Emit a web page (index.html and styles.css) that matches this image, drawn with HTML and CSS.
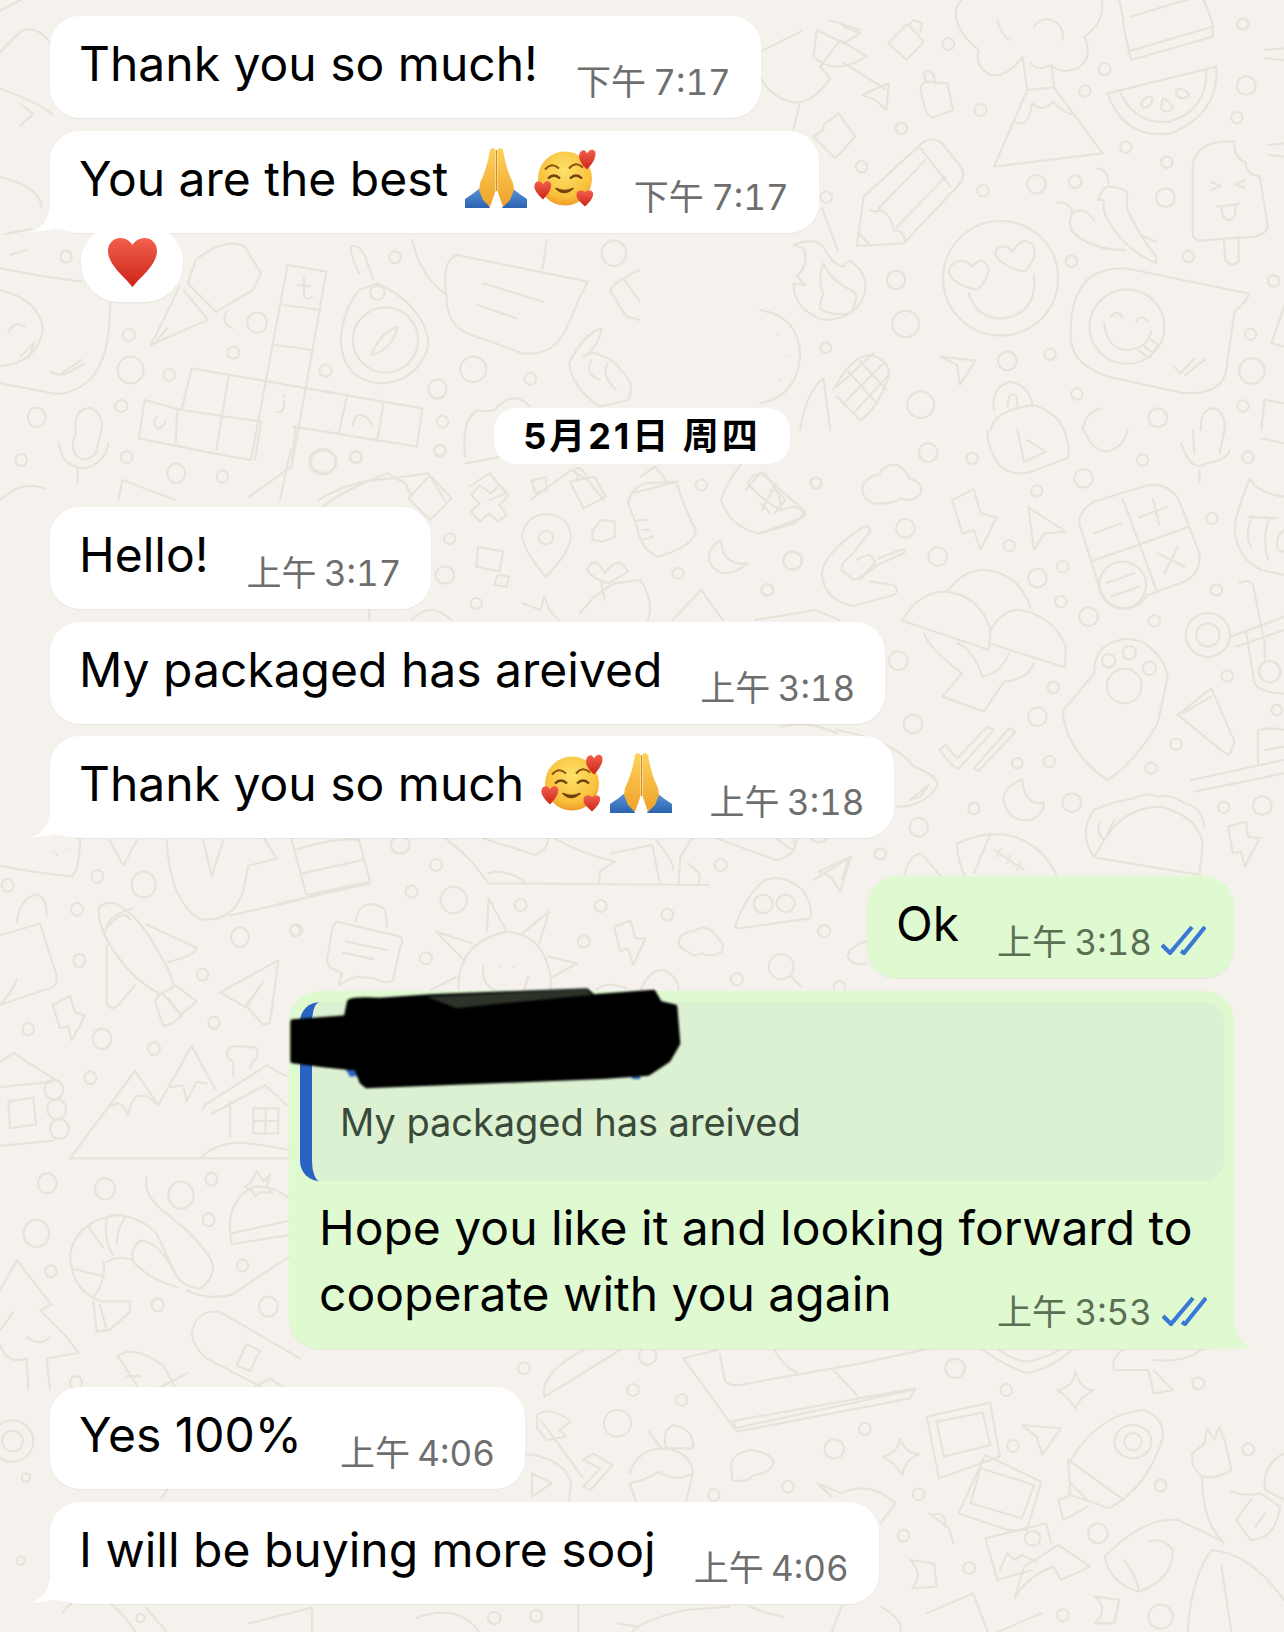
FILE: index.html
```html
<!DOCTYPE html>
<html>
<head>
    <meta charset="utf-8">
    <title>Chat</title>
    <link rel="stylesheet" href="styles.css">
</head>
<body>
    <svg class="doodles" width="1284" height="1632" viewBox="0 0 1284 1632" fill="none">
        <!-- top right -->
        <g transform="translate(760 0) scale(.3342 .3333)">
            <circle cx="563" cy="132" r="18"/><circle cx="1031" cy="207" r="18"/><circle cx="972" cy="273" r="17"/><circle cx="660" cy="330" r="18"/><circle cx="423" cy="385" r="17"/><circle cx="1095" cy="442" r="17"/><circle cx="1217" cy="487" r="17"/><circle cx="304" cy="500" r="17"/><circle cx="667" cy="572" r="17"/><circle cx="827" cy="553" r="28"/><circle cx="943" cy="545" r="19"/><circle cx="1213" cy="593" r="28"/><circle cx="1445" cy="72" r="17"/><circle cx="1455" cy="257" r="28"/><circle cx="1427" cy="353" r="17"/><circle cx="198" cy="592" r="17"/><circle cx="407" cy="840" r="28"/><circle cx="436" cy="972" r="40"/><circle cx="197" cy="1043" r="16"/><circle cx="932" cy="784" r="17"/><circle cx="1282" cy="770" r="17"/><circle cx="1537" cy="843" r="17"/><circle cx="1468" cy="1003" r="17"/><circle cx="868" cy="1063" r="17"/><circle cx="740" cy="1083" r="28"/><circle cx="1472" cy="1113" r="38"/><circle cx="481" cy="1214" r="40"/><circle cx="948" cy="1182" r="17"/><circle cx="1190" cy="1253" r="28"/><circle cx="1445" cy="1218" r="17"/>
            <!-- volcano -->
            <path d="M700 500 L800 270 L880 262 L1025 460 Z M800 270 L785 170 M880 262 L872 195 M765 365 Q800 390 815 310 Q850 340 875 305 Q910 340 940 345"/>
            <path d="M785 170 Q740 235 690 225 Q640 200 655 150 Q590 100 585 40 Q590 0 620 -10 M1020 -10 Q1040 60 970 110 Q1000 170 950 205 Q900 225 872 195 Q830 215 810 190 M820 80 Q850 40 890 70 Q910 90 905 120 M710 60 Q720 100 745 120"/>
            <!-- watermelon -->
            <path d="M1040 280 L1365 200 Q1375 340 1230 400 Q1090 420 1040 280 Z M1075 272 Q1120 375 1225 365 Q1340 330 1335 210"/>
            <path d="M1140 310 Q1160 280 1175 295 Q1170 325 1145 322 Z M1205 295 Q1230 305 1235 325 Q1215 345 1200 325 Z M1245 270 Q1270 260 1285 285 Q1265 305 1245 285 Z"/>
            <!-- popsicle -->
            <path d="M1295 700 L1295 490 Q1310 430 1385 425 L1420 425 Q1415 470 1455 490 Q1450 520 1495 530 L1520 680 Q1510 715 1440 712 L1320 722 Q1295 720 1295 700 Z M1388 722 L1392 780 Q1410 805 1432 785 L1432 716 M1350 545 L1378 558 L1350 570 M1450 540 L1422 552 L1450 565 M1368 620 L1432 612 M1380 622 L1385 650 Q1405 670 1420 650 L1424 615"/>
            <!-- pencil -->
            <path d="M310 590 L490 425 Q520 410 545 430 L600 500 Q620 530 590 560 L430 730 L290 738 Z M290 738 L310 590 M480 445 L570 560 M355 625 L495 480 M410 680 L555 530 M330 630 Q350 640 360 630 Q390 640 400 690 Q430 690 435 725 M295 700 L330 735"/>
            <!-- heart eyes -->
            <circle cx="720" cy="835" r="172"/>
            <path d="M630 865 C570 850 550 810 580 790 Q610 770 635 800 Q670 760 685 810 Q680 840 650 870 Z M790 815 C730 800 690 770 710 745 Q735 730 755 755 Q790 700 820 740 Q830 780 790 815 Z M625 880 Q650 960 730 955 Q830 940 820 825"/>
            <!-- smiley blob -->
            <path d="M1460 880 Q1470 890 1420 935 L1395 1110 Q1380 1190 1260 1178 L1040 1130 Q920 1090 930 990 Q930 880 990 830 Q1050 795 1120 810 Z"/>
            <circle cx="1098" cy="980" r="112"/>
            <path d="M1030 970 Q1040 1050 1100 1050 Q1160 1045 1170 995 M1050 952 Q1068 925 1085 952 M1125 965 Q1140 940 1160 965 M1130 1050 L1165 1075 L1190 1035 L1170 1020 M1150 1040 L1170 1055 M1238 1098 L1258 1120 L1300 1075 M1272 1125 L1332 1078"/>
            <!-- chili -->
            <path d="M1005 505 Q1040 505 1042 548 M1012 600 Q1030 550 1050 560 Q1090 565 1100 578 Q1095 600 1100 630 Q1130 700 1185 770 L1185 790 Q1100 750 1060 690 Q1020 640 1030 600 Z M890 608 Q930 605 935 640 Q920 670 935 695 Q990 750 1090 750 M935 640 Q965 615 1000 660 M1140 705 L1185 725"/>
            <!-- flame -->
            <path d="M100 735 Q160 710 190 740 Q220 800 250 800 Q260 775 280 790 Q330 830 310 890 Q280 960 190 960 Q100 930 100 850 L135 855 L110 830 Q150 790 130 745 Z M190 790 Q170 840 190 880 Q180 900 180 925 Q210 950 270 940 Q300 890 280 875 Q210 840 190 790 Z"/>
            <!-- left bits -->
            <path d="M383 130 L438 75 L445 75 L490 125 L438 180 Z M445 75 L460 60 L485 70 L480 95"/>
            <path d="M480 270 Q480 250 500 245 L560 250 L578 330 L520 352 Q500 350 495 330 Z M495 240 L490 220 Q505 205 520 225 L525 250"/>
            <path d="M305 285 L385 250 L378 330 L345 300 Z M250 80 L300 100 L250 130 L170 90 L160 170 Q220 230 320 170 L240 120 L180 200 L210 235 Q150 320 90 305 Q30 290 0 230 M120 305 L100 390 M205 60 L300 90"/>
            <path d="M235 340 L285 410 L225 475 L180 430 L160 410 L190 390 L190 375 Z"/>
            <!-- cake -->
            <path d="M1090 90 Q1085 40 1075 0 M1355 80 Q1345 30 1320 -10 M1090 90 L1110 180 L1355 110 L1355 80 L1100 155 M1110 50 L1290 -5"/>
            <!-- plane, corn -->
            <path d="M540 1070 L645 1082 L598 1155 L590 1095 Z"/>
            <path d="M120 1290 Q140 1170 190 1135 L210 1290 M220 1170 Q270 1070 330 1065 Q390 1080 385 1130 Q350 1230 300 1260 L230 1190 M260 1110 L350 1210 M300 1085 L380 1170 M230 1160 L340 1060 M250 1210 L370 1090 M280 1240 L380 1130"/>
            <!-- lock -->
            <path d="M690 1290 Q700 1230 820 1215 Q890 1240 910 1290 M700 1230 Q690 1160 750 1145 Q810 1160 815 1220 M740 1220 L745 1190 Q755 1175 768 1190 L770 1220"/>
            <path d="M965 1290 Q975 1235 1020 1225 M1320 1290 Q1315 1225 1360 1225 Q1395 1240 1390 1290 M1500 1290 L1510 1200 L1570 1210"/>
            <path d="M0 930 Q120 950 120 1070 Q110 1190 0 1210 M55 1005 L55 1006 M80 1070 L80 1071 M60 1140 L60 1141 M1568 920 L1530 1030 L1570 1040 M1510 150 L1568 145 M1510 175 L1568 180 M1520 435 L1568 430 M1520 465 L1568 470"/>
        </g>
        <!-- right middle -->
        <g transform="translate(760 430) scale(.3342 .3333)">
            <circle cx="503" cy="68" r="28"/><circle cx="635" cy="85" r="17"/><circle cx="1145" cy="90" r="17"/><circle cx="1460" cy="82" r="17"/><circle cx="968" cy="145" r="28"/><circle cx="168" cy="160" r="16"/><circle cx="828" cy="183" r="17"/><circle cx="1352" cy="265" r="17"/><circle cx="435" cy="295" r="28"/><circle cx="532" cy="380" r="28"/><circle cx="98" cy="392" r="28"/><circle cx="746" cy="347" r="17"/><circle cx="905" cy="410" r="17"/><circle cx="830" cy="444" r="28"/><circle cx="22" cy="480" r="18"/><circle cx="900" cy="515" r="17"/><circle cx="983" cy="560" r="28"/><circle cx="1366" cy="480" r="17"/><circle cx="1180" cy="573" r="17"/><circle cx="414" cy="692" r="28"/><circle cx="878" cy="772" r="17"/><circle cx="1398" cy="738" r="17"/><circle cx="1546" cy="840" r="16"/><circle cx="458" cy="882" r="28"/><circle cx="830" cy="860" r="28"/><circle cx="1245" cy="943" r="17"/><circle cx="770" cy="1000" r="16"/><circle cx="866" cy="995" r="17"/><circle cx="1170" cy="1015" r="17"/><circle cx="933" cy="1118" r="28"/><circle cx="640" cy="1136" r="17"/><circle cx="1387" cy="1132" r="17"/><circle cx="1503" cy="1127" r="28"/><circle cx="475" cy="1192" r="28"/><circle cx="360" cy="1272" r="17"/>
            <!-- calculator -->
            <path d="M955 280 Q955 240 1000 215 L1160 165 Q1230 160 1255 215 L1315 370 Q1320 430 1270 455 L1160 495 Q1130 540 1080 535 Q1030 525 1015 470 Z M1085 205 L1190 490 M990 395 L1285 290 M1000 310 L1080 280 M1135 262 L1220 230 M1175 205 L1195 285 M1190 370 L1270 410 M1250 350 L1210 430"/>
            <circle cx="1085" cy="465" r="70"/>
            <path d="M1035 460 L1120 430 M1050 500 L1135 470"/>
            <!-- bolt, plane -->
            <path d="M575 210 L640 178 L660 250 L708 262 L660 360 L640 300 L605 310 Z"/>
            <path d="M803 232 L915 305 L850 310 L820 360 Z"/>
            <!-- cloud -->
            <path d="M340 220 Q295 200 310 160 Q340 130 355 135 Q370 100 410 105 Q440 120 445 145 Q490 155 480 190 Q460 220 420 205 Q390 225 340 220 Z"/>
            <!-- rock hand -->
            <path d="M310 290 Q330 285 330 305 L270 380 M310 290 Q190 370 185 430 Q190 510 280 528 L400 495 Q420 480 400 465 L330 455 M270 380 Q240 400 245 420 L280 450 Q310 440 350 405 L430 370 Q440 355 420 360 L355 385 M290 390 Q310 375 330 375 L345 395 L300 450"/>
            <path d="M0 125 Q60 180 125 235 Q150 255 120 265 L0 310 M30 180 Q60 180 75 210 L45 250 M0 220 Q15 230 30 250"/>
            <!-- tacos helmet -->
            <path d="M425 572 Q480 480 560 485 Q660 500 690 600 L685 660 Z M560 485 Q610 415 680 420 Q780 435 810 535 M690 600 Q730 535 780 540 Q880 560 915 650 L912 712 L685 640"/>
            <path d="M490 610 Q510 660 605 730 L545 800 L670 845 L730 755 Q800 750 820 700 M590 640 Q640 660 665 740 Q720 730 745 670"/>
            <!-- paw -->
            <path d="M905 845 L1000 730 Q1000 660 1050 640 Q1100 615 1150 640 Q1210 680 1220 740 L1190 880 Q1120 1000 1040 1050 Q920 970 905 845 Z"/>
            <circle cx="1090" cy="768" r="52"/><circle cx="1043" cy="692" r="20"/><circle cx="1105" cy="668" r="20"/><circle cx="1165" cy="715" r="20"/>
            <!-- tube, scissors -->
            <path d="M1250 855 L1350 775 L1420 935 L1405 975 L1385 965 Z M1265 850 L1350 800"/>
            <circle cx="1340" cy="615" r="66"/><circle cx="1340" cy="615" r="35"/>
            <path d="M1410 620 L1568 560 M1425 650 L1568 600 M1435 460 Q1460 445 1475 465 L1510 640 L1510 690 M1455 610 L1480 760 Q1500 790 1568 790"/>
            <circle cx="1525" cy="725" r="32"/>
            <!-- ticks -->
            <path d="M537 958 L555 945 L590 985 L680 890 L700 900 L595 1015 Q580 1020 537 958 Z M640 1015 L745 895 L765 905 L655 1022 Z"/>
            <!-- moon -->
            <path d="M785 1048 Q720 1075 730 1120 Q750 1180 810 1170 Q850 1150 850 1118 Q790 1130 785 1048 Z"/>
            <!-- taco -->
            <path d="M1000 1282 L1030 1230 Q1090 1130 1200 1130 Q1310 1160 1325 1240 L1315 1335 L1000 1282 Z M1000 1282 Q950 1210 1000 1140 Q1050 1115 1120 1105 Q1160 1085 1190 1100 Q1230 1090 1270 1120 Q1320 1130 1330 1190 M1030 1230 Q1000 1200 1020 1175 M1060 1170 L1040 1210"/>
            <!-- football -->
            <path d="M590 1240 Q720 1180 820 1250 Q880 1300 890 1350 M590 1240 Q590 1300 620 1350 M690 1210 L640 1330 M700 1260 L790 1320 M720 1255 L710 1280 M750 1275 L740 1300 M780 1295 L770 1320"/>
            <path d="M1400 1190 L1455 1175 L1460 1220 L1495 1225 L1450 1310 L1440 1265 L1415 1270 Z M1290 1050 L1568 990 M1300 1085 L1568 1030 M1490 1000 L1490 900 Q1530 890 1568 900 M1510 960 L1568 950"/>
            <path d="M680 0 Q680 60 720 110 Q770 150 850 110 L920 85 Q930 60 910 0 M770 0 L790 95 L855 65 L800 30 M970 0 Q990 60 1040 65 Q1090 50 1100 0 M1260 40 Q1290 130 1335 100 Q1400 90 1405 60 M1295 0 L1300 70 M1390 0 L1375 70 M1315 120 L1315 160 M1500 25 L1568 40"/>
            <path d="M1465 145 Q1490 190 1568 200 M1465 145 Q1420 260 1420 300 Q1430 390 1500 420 L1568 435 M1460 260 L1545 265 M1470 260 Q1450 330 1470 350 M1525 265 Q1500 320 1520 390 M1568 300 Q1540 320 1550 360 L1568 365"/>
            <path d="M160 1350 L265 1285 L245 1350 M430 1350 Q440 1280 480 1270 Q510 1300 550 1350 M60 890 Q150 870 230 910 M230 900 Q400 930 460 1010 Q540 1040 530 1070 Q490 1130 410 1130 M450 1110 L505 1065 L480 1100 Z M50 1225 Q120 1290 100 1225 M150 1225 Q180 1250 200 1225"/>
        </g>
        <!-- left lower -->
        <g transform="translate(0 830) scale(.3333 .357)">
            <circle cx="292" cy="130" r="18"/><circle cx="431" cy="153" r="36"/><circle cx="23" cy="155" r="18"/><circle cx="231" cy="222" r="18"/><circle cx="720" cy="300" r="27"/><circle cx="885" cy="282" r="15"/><circle cx="238" cy="365" r="18"/><circle cx="608" cy="405" r="17"/><circle cx="85" cy="558" r="17"/><circle cx="306" cy="585" r="28"/><circle cx="642" cy="540" r="17"/><circle cx="462" cy="612" r="18"/><circle cx="271" cy="694" r="18"/><circle cx="142" cy="990" r="28"/><circle cx="315" cy="1005" r="30"/><circle cx="543" cy="1023" r="38"/><circle cx="634" cy="978" r="18"/><circle cx="626" cy="1092" r="18"/><circle cx="109" cy="1130" r="38"/><circle cx="153" cy="1236" r="17"/><circle cx="728" cy="1220" r="17"/><circle cx="473" cy="1330" r="18"/><circle cx="805" cy="1335" r="28"/><circle cx="228" cy="1548" r="18"/>
            <!-- rocket -->
            <path d="M295 225 Q300 200 345 205 Q420 240 480 350 Q520 410 520 440 L480 460 Q400 420 350 350 Q300 290 295 225 Z M315 290 Q320 240 395 220 M325 270 Q370 220 390 250 M440 265 L590 330 Q590 350 505 370 M320 325 L320 485 Q335 510 355 490 L405 435 M480 460 L465 480 L490 550 L520 540 L545 520 L490 460 M520 430 L590 480 L545 515 M505 470 L545 520"/>
            <path d="M660 455 L835 365 L810 540 L790 545 L740 495 L790 425 L735 495 Z"/>
            <path d="M158 490 L210 465 L225 510 L255 520 L215 590 L205 550 L180 555 Z"/>
            <!-- mountains + house -->
            <path d="M210 920 L405 675 L475 770 L575 605 L645 725 M330 775 Q370 750 382 800 Q400 740 420 745 L440 745 L475 770 M510 720 L550 715 L560 760 L590 705 L620 710"/>
            <path d="M210 920 L870 920 M690 860 L690 760 M610 780 L615 770 L800 660 L860 690 M635 795 L795 715 L860 770 M700 690 L700 650 L680 635 Q680 605 710 605 L770 610 Q780 640 755 650 L750 670"/>
            <path d="M760 780 L835 780 L835 850 L760 850 Z M797 780 L797 850 M760 815 L835 815 M600 920 Q640 880 720 875 Q770 880 865 895"/>
            <!-- cabin -->
            <path d="M0 650 L40 625 L175 705 M0 720 L160 705 M0 885 L160 870 M100 750 L25 760 L30 835 L108 825 Z"/>
            <circle cx="162" cy="727" r="28"/><circle cx="170" cy="782" r="28"/><circle cx="178" cy="837" r="28"/>
            <!-- bag bits -->
            <path d="M0 295 L120 262 L160 380 Q180 420 160 440 L0 490 M50 260 Q60 190 110 180 Q140 190 140 240 M0 100 Q100 120 215 130 Q240 110 240 20 M160 60 L160 61 M200 55 L200 56 M170 70 L170 71 M0 490 Q40 450 50 420"/>
            <path d="M500 30 Q510 200 600 250 Q700 260 730 170 L745 100 L830 80 L790 20 M610 30 L635 130 L670 30 M690 240 L900 195 M330 30 L370 100 L410 30"/>
            <!-- shrimp -->
            <path d="M210 1190 Q230 1090 360 1078 Q430 1090 470 1130 L530 1250 Q550 1280 600 1285 Q640 1260 640 1220 Q620 1160 480 1060 Q430 1020 440 970 M530 1250 L500 1200 Q460 1150 420 1150 Q390 1170 400 1210 Q450 1260 530 1280 M210 1190 Q215 1280 280 1310 L300 1320 L390 1320 L390 1350 L330 1400 L290 1405 L280 1320 M320 1400 L300 1330 M310 1210 Q320 1260 280 1310 M320 1210 Q350 1190 400 1205 M225 1230 L310 1250 M265 1110 L310 1170 M320 1090 Q310 1150 340 1190 M375 1085 Q350 1120 350 1160"/>
            <path d="M560 1290 Q630 1320 700 1300 Q790 1240 870 1195"/>
            <!-- beanie -->
            <path d="M695 1160 Q670 1040 760 1000 Q810 990 865 1030 M695 1130 L865 1095 M695 1160 L865 1135"/>
            <path d="M770 955 L790 985 L810 965 L800 1000 L815 1015 L780 1015 L765 1025 L755 1010 L735 1000 L755 985 Z"/>
            <!-- tree, board -->
            <path d="M0 1290 L50 1205 L155 1330 L120 1345 L200 1420 L235 1465 L140 1480 L150 1568 M0 1400 Q20 1380 40 1350 M80 1420 Q120 1450 150 1420 M0 1440 Q20 1500 80 1480 M80 1480 L85 1568"/>
            <path d="M900 1480 L660 1350 Q590 1340 575 1410 Q580 1450 620 1480 L800 1568 M710 1500 L740 1440 L780 1460 L750 1515 Z M350 1475 Q400 1440 490 1500 L530 1568 M355 1475 L420 1568 M380 1530 L420 1530"/>
        </g>
        <!-- crossword row -->
        <g transform="translate(0 240) scale(.408 .3333)">
            <path d="M705 75 L800 95 L715 680 L610 770 M705 75 L615 660 L525 640 L340 595 L355 480 L445 510 L470 385 L1035 505 L1022 620 L720 560 M695 195 L785 210 M675 315 L765 330 M660 425 L750 445 M445 510 L640 545 M560 410 L545 520 L530 630 M435 505 L430 610 M850 470 L830 580 M940 490 L925 600 M640 545 L625 660 M725 560 L715 670"/>
            <path d="M745 115 L745 170 Q755 185 765 170 M730 135 L760 138 M695 465 L695 470 M695 480 Q700 520 680 515 M385 530 Q370 545 385 565 Q400 565 405 545 M865 555 Q870 520 885 525 Q905 530 910 555"/>
            <!-- compass -->
            <path d="M880 150 L925 130 L970 160 Q1050 230 1050 320 Q1020 430 930 430 Q840 420 835 300 Q840 210 880 150 Z M860 20 Q880 10 895 50 L915 120 M880 100 Q860 50 860 20 M975 260 Q930 280 910 345 Q960 330 975 260 Z"/>
            <ellipse cx="945" cy="300" rx="80" ry="98"/><ellipse cx="925" cy="158" rx="18" ry="22"/>
            <!-- pen -->
            <path d="M440 140 L370 315 L470 260 L510 240 M450 150 L510 240 M480 60 Q550 -10 600 20 L640 100 L620 150 L530 215 L460 130 Z M410 265 L385 300 M555 215 Q540 250 570 265"/>
            <!-- bubble -->
            <path d="M1440 125 L1120 45 Q1080 60 1095 180 Q1095 270 1180 295 L1280 340 Q1360 350 1390 260 L1420 175 Z M1185 130 L1330 185 M1170 195 L1265 235"/>
            <path d="M1010 0 Q1030 110 1095 165 M1340 0 L1330 85"/>
            <!-- thumb -->
            <path d="M1475 265 Q1430 280 1395 370 Q1400 440 1470 500 L1540 480 Q1560 430 1520 390 Q1510 360 1470 345 Q1450 330 1430 350 M1475 265 Q1470 310 1440 340 M1450 360 Q1430 400 1470 420 M1490 370 Q1470 400 1510 450"/>
            <path d="M1568 90 Q1510 120 1495 150 L1535 230 L1568 240 M1530 120 L1568 185"/>
            <!-- dots -->
            <ellipse cx="162" cy="50" rx="14" ry="18"/><ellipse cx="968" cy="52" rx="14" ry="18"/><ellipse cx="1505" cy="40" rx="30" ry="38"/><ellipse cx="630" cy="248" rx="24" ry="30"/><ellipse cx="316" cy="285" rx="15" ry="18"/><ellipse cx="572" cy="338" rx="15" ry="18"/><ellipse cx="320" cy="390" rx="32" ry="40"/><ellipse cx="415" cy="405" rx="14" ry="18"/><ellipse cx="798" cy="392" rx="15" ry="18"/><ellipse cx="1160" cy="388" rx="32" ry="38"/><ellipse cx="1300" cy="416" rx="14" ry="18"/><ellipse cx="1072" cy="447" rx="22" ry="29"/><ellipse cx="297" cy="498" rx="15" ry="18"/><ellipse cx="90" cy="532" rx="22" ry="29"/><ellipse cx="1085" cy="545" rx="14" ry="18"/><ellipse cx="1078" cy="632" rx="14" ry="18"/><ellipse cx="52" cy="660" rx="14" ry="18"/><ellipse cx="310" cy="652" rx="14" ry="18"/><ellipse cx="790" cy="665" rx="32" ry="38"/><ellipse cx="872" cy="652" rx="15" ry="18"/><ellipse cx="432" cy="700" rx="22" ry="29"/><ellipse cx="545" cy="710" rx="14" ry="18"/>
            <!-- smiley, mic -->
            <path d="M0 150 Q100 180 105 270 Q90 370 0 378 M20 275 Q40 240 60 260 M50 350 L85 305 L70 355 M0 85 Q100 110 200 125 M270 190 Q270 360 220 420 Q170 470 130 460 L0 430 M125 395 L145 405 L200 360 M155 405 L205 372"/>
            <path d="M185 580 L185 540 Q195 500 225 505 Q250 520 250 560 L235 640 Q210 670 190 650 Q170 630 185 580 M145 610 Q150 680 205 685 Q260 670 265 610 M190 685 L190 730"/>
            <path d="M300 720 L430 780 M300 720 L290 780 M0 780 Q50 720 110 745 M780 780 Q860 720 960 715 L1050 700 L1090 780 M1140 650 Q1130 540 1170 510 Q1210 520 1220 500 Q1260 450 1300 500 M1140 670 L1230 650 M1300 780 L1400 690 L1440 720 L1480 780 M1150 740 L1200 700 L1240 760 L1200 780"/>
        </g>
        <!-- under the date -->
        <g transform="translate(280 440) scale(.357 .3333)">
            <ellipse cx="122" cy="65" rx="36" ry="34"/><ellipse cx="212" cy="52" rx="16" ry="16"/><ellipse cx="448" cy="32" rx="16" ry="16"/><ellipse cx="1180" cy="135" rx="16" ry="16"/><ellipse cx="1500" cy="128" rx="16" ry="16"/><ellipse cx="475" cy="296" rx="16" ry="16"/><ellipse cx="462" cy="405" rx="26" ry="26"/><ellipse cx="550" cy="490" rx="16" ry="16"/><ellipse cx="1115" cy="400" rx="16" ry="16"/><ellipse cx="1365" cy="450" rx="16" ry="16"/><ellipse cx="1435" cy="362" rx="26" ry="26"/><circle cx="745" cy="293" r="20"/>
            <path d="M745 410 Q680 330 678 285 Q690 225 745 222 Q810 225 815 290 Q810 340 745 410 Z M875 272 L900 240 L938 245 L938 290 L905 305 L875 300 Z"/>
            <path d="M360 175 L420 105 L480 175 L420 240 Z M535 165 L560 135 L590 160 L615 135 L640 165 L615 195 L635 225 L610 245 L585 220 L560 245 L535 215 L560 190 Z M705 122 L745 112 L748 150 L715 158 Z M812 125 L880 110 L912 170 L850 205 Z M835 115 L825 90 Q835 75 850 95 L865 115"/>
            <path d="M975 190 Q980 150 1020 130 L1110 125 Q1130 200 1165 270 Q1160 320 1060 350 Q1010 330 1000 260 Z M985 160 L1115 125 M1010 110 L1050 80 L1090 130 M1000 240 L1030 240 M1015 270 L1035 270 M1010 300 L1045 290"/>
            <path d="M1290 75 Q1250 130 1235 180 Q1260 260 1340 280 L1440 250 Q1490 215 1440 200 L1400 210 Q1340 170 1310 130 Q1320 100 1355 100 Q1410 160 1400 210 M1305 150 L1345 100 M1350 210 L1390 130"/>
            <path d="M1235 300 Q1190 330 1205 370 Q1240 430 1310 370 Q1240 380 1235 300 Z M555 320 L625 335 L615 395 L550 380 Z M610 405 L642 410 L635 440 L600 435 Z"/>
            <path d="M860 390 Q880 340 910 400 Q950 340 975 395 L920 430 Q880 420 860 390 Z M840 520 L880 470 L935 430 L1010 420 Q1050 490 1030 540 M900 430 L910 480 M680 490 L730 510 L740 470 L755 510 L780 540 M1100 540 L1180 450 L1240 540 M1330 540 L1500 510 L1568 540"/>
            <path d="M120 200 Q180 150 300 100 L350 130 L370 170 M0 180 L30 30 M250 500 L250 540 M370 540 Q420 480 480 540"/>
        </g>
        <!-- between the bubbles -->
        <g transform="translate(280 830) scale(.376 .3333)">
            <ellipse cx="320" cy="45" rx="25" ry="26"/><ellipse cx="415" cy="105" rx="16" ry="18"/><ellipse cx="1172" cy="105" rx="16" ry="18"/><ellipse cx="350" cy="185" rx="16" ry="18"/><ellipse cx="462" cy="210" rx="35" ry="40"/><ellipse cx="640" cy="225" rx="16" ry="18"/><ellipse cx="853" cy="228" rx="16" ry="18"/><ellipse cx="1030" cy="254" rx="16" ry="18"/><ellipse cx="43" cy="300" rx="16" ry="18"/><ellipse cx="1447" cy="304" rx="16" ry="18"/><ellipse cx="808" cy="335" rx="16" ry="18"/><ellipse cx="388" cy="385" rx="16" ry="18"/><ellipse cx="1215" cy="448" rx="16" ry="18"/><ellipse cx="1488" cy="472" rx="16" ry="18"/>
            <path d="M30 25 L70 195 L240 155 L210 30 Q150 20 40 60 M60 130 L220 90 M0 220 L240 160 M440 25 Q490 70 510 95 L555 160 L1140 165 M555 130 Q600 115 650 155 M540 25 L680 75 Q710 60 715 25 M730 25 Q800 70 890 95 L850 125 L850 160 M880 70 L990 45 L1010 160 M1000 30 Q1050 100 1045 120 M1060 160 L1065 80 L1095 25 M1085 100 L1115 130 L1115 165 M1160 25 L1320 90 Q1370 80 1375 25"/>
            <path d="M150 275 L320 320 Q330 330 320 350 L300 450 Q290 465 250 445 L200 440 L155 465 L165 430 L130 410 L125 390 L140 290 Z M200 275 L210 240 Q240 205 280 240 L285 290 M175 335 L285 360 M168 368 L250 388"/>
            <path d="M1210 290 Q1240 190 1290 150 Q1340 130 1390 180 Q1420 230 1410 265 L1220 295 Z M1432 125 L1518 80 L1490 185 L1465 140 Z"/>
            <ellipse cx="1285" cy="222" rx="25" ry="28"/><ellipse cx="1345" cy="220" rx="24" ry="26"/>
            <path d="M888 290 L932 272 L945 325 L972 325 L940 405 L925 355 L905 365 Z M1085 365 Q1050 350 1065 320 Q1085 300 1100 305 Q1120 285 1145 300 Q1160 315 1165 325 Q1185 340 1175 365 Q1150 385 1120 370 Q1100 385 1085 365 Z"/>
            <path d="M475 480 Q470 340 600 305 Q700 310 720 440 L720 480 M510 340 L415 305 L485 385 M550 305 L555 205 L600 300 M645 310 L715 245 L690 340 M715 380 L790 400 L720 445 M540 410 Q535 460 570 480 M660 440 L650 480 M585 410 L585 411 M620 412 L620 413 M400 480 L470 440 M960 480 Q980 420 1020 420 Q1060 440 1060 480 M840 480 Q870 450 920 475"/>
            <ellipse cx="1333" cy="410" rx="33" ry="38"/>
            <path d="M1360 440 L1385 470 M1568 330 Q1510 350 1510 380 Q1520 410 1560 400"/>
        </g>
        <!-- bottom right -->
        <g transform="translate(520 1340) scale(.4872 .3333)">
            <ellipse cx="262" cy="48" rx="18" ry="26"/><ellipse cx="893" cy="85" rx="20" ry="29"/><ellipse cx="8" cy="85" rx="12" ry="18"/><ellipse cx="232" cy="150" rx="12" ry="18"/><ellipse cx="332" cy="180" rx="12" ry="18"/><ellipse cx="998" cy="150" rx="12" ry="18"/><ellipse cx="1392" cy="130" rx="12" ry="18"/><ellipse cx="200" cy="250" rx="28" ry="40"/><ellipse cx="708" cy="267" rx="12" ry="18"/><ellipse cx="645" cy="327" rx="20" ry="29"/><ellipse cx="1012" cy="318" rx="12" ry="18"/><ellipse cx="1495" cy="328" rx="12" ry="18"/><ellipse cx="1315" cy="437" rx="12" ry="18"/><ellipse cx="550" cy="440" rx="12" ry="18"/><ellipse cx="398" cy="465" rx="12" ry="18"/><ellipse cx="818" cy="463" rx="12" ry="18"/><ellipse cx="1186" cy="580" rx="20" ry="29"/><ellipse cx="787" cy="587" rx="12" ry="18"/><ellipse cx="922" cy="684" rx="12" ry="18"/><ellipse cx="1114" cy="826" rx="12" ry="18"/><ellipse cx="33" cy="828" rx="12" ry="18"/><ellipse cx="1315" cy="830" rx="25" ry="36"/>
            <!-- laptop -->
            <path d="M335 55 L440 265 L805 150 L810 145 L430 245 L335 55 Z M335 55 L405 30 M410 40 L420 120 Q430 140 450 135 L700 70 L840 25 M640 85 L695 170 M520 25 Q540 80 570 100 M440 250 L445 275 L800 175 L810 150"/>
            <path d="M205 30 Q130 100 50 170 Q40 100 130 30"/>
            <path d="M945 25 Q1000 80 1040 100 Q1100 80 1135 25 M980 25 Q1010 60 1040 65 Q1090 50 1110 25 M1300 160 L1290 90 L1220 90 Q1210 60 1240 25 M1300 90 L1340 150 L1300 160 M1400 25 Q1370 70 1300 60"/>
            <path d="M1140 95 Q1150 150 1178 150 Q1150 170 1140 205 Q1125 170 1103 150 Q1135 145 1140 95 Z M780 295 Q790 340 820 342 Q790 360 785 405 Q770 370 745 350 Q775 340 780 295 Z"/>
            <!-- photos -->
            <path d="M835 230 L965 188 L985 350 L860 415 Z M855 245 L950 218 L965 315 L870 350 Z M900 520 L955 345 L1070 425 L1040 570 L1000 570 Z M945 385 L1055 435 L1030 535 L925 490 Z M955 595 L1080 550 L1090 610 M955 595 L980 720 L1050 690 M985 690 L1000 640 L1015 660 L1030 645 L1060 665"/>
            <ellipse cx="1052" cy="595" rx="16" ry="22"/>
            <path d="M1030 255 L1110 265 L1072 345 L1060 290 Z M35 225 Q60 195 105 245 L80 270 L95 290 L55 300 L35 265 Z"/>
            <!-- rocket -->
            <path d="M1130 360 Q1190 220 1280 210 Q1320 230 1320 290 Q1290 440 1210 505 L1130 465 L1125 360 M1125 360 L1240 480"/>
            <ellipse cx="1258" cy="305" rx="38" ry="50"/><ellipse cx="1258" cy="305" rx="18" ry="26"/>
            <path d="M1165 480 L1130 430 L1125 470 L1105 480 L1115 540 L1165 500"/>
            <!-- peace hand -->
            <path d="M1405 310 L1410 265 L1425 300 L1435 260 L1448 310 L1460 390 Q1430 420 1400 410 Q1375 380 1380 340 L1405 310 M1400 410 Q1400 540 1440 600 M1460 455 Q1490 470 1520 460 L1560 500 Q1550 600 1500 600 L1470 540 L1500 480 M1510 560 L1530 520 M1568 340 Q1520 380 1530 450 L1568 480"/>
            <path d="M1200 650 Q1280 530 1350 540 Q1440 600 1445 610 M1200 650 Q1210 730 1270 755 Q1340 720 1340 630 Q1320 590 1290 605 M1240 660 Q1270 720 1270 755"/>
            <path d="M1370 876 Q1380 700 1420 630 Q1500 640 1568 780 M1440 680 L1460 876"/>
            <path d="M1035 680 L1105 615 L1170 680 L1110 720 L1095 680 Q1040 710 1015 775 Z M800 660 L850 670 L855 740 L805 745 Q830 700 800 660 Z M1180 770 L1230 780 L1220 850 L1180 850 Q1210 810 1180 770 Z"/>
            <!-- misc -->
            <path d="M225 400 Q240 330 290 325 Q350 330 355 400 L340 490 M225 430 Q260 420 285 395 Q320 430 355 400 M225 430 L240 490 M290 325 L265 275 M315 255 Q360 270 355 325 L300 325 Q290 270 315 255 Z M435 400 Q425 340 475 330 Q520 340 520 370 Q515 400 480 405 Q465 430 435 420 Z"/>
            <path d="M0 340 Q90 350 105 430 L100 490 M25 400 L65 430 L25 470 Z M150 340 L190 375 L145 450 L130 440 L165 385 L130 360 Z"/>
            <path d="M610 430 L660 460 Q720 420 770 490 L740 550 M610 430 L640 470 M840 520 L880 565 L890 610 M850 525 Q870 510 875 560"/>
            <path d="M120 800 L120 876 M230 876 Q250 840 340 810 L430 800 M470 800 L510 820 L540 830 M660 800 L640 876 M740 800 Q790 840 780 876 M835 820 L930 760 L960 876 M980 876 L1070 820 M200 850 L240 860"/>
        </g>
        <!-- bottom left, top left -->
        <g transform="scale(1.0405)">
            <circle cx="12" cy="1385" r="20"/><circle cx="12" cy="1385" r="10"/><circle cx="25" cy="1420" r="4"/><circle cx="20" cy="1500" r="4"/>
            <path d="M130 1345 L180 1320 M220 1345 L260 1325 L290 1345 M340 1345 Q390 1385 440 1345 M60 1550 Q90 1510 130 1568 M240 1560 L300 1545 L300 1568 M140 1545 L160 1568 M400 1555 Q440 1540 460 1568 M180 1350 L180 1385 Q170 1420 155 1440 M300 1350 Q350 1380 350 1400 M520 1365 L560 1420"/>
            <circle cx="255" cy="1340" r="4"/><circle cx="135" cy="1555" r="4"/><circle cx="475" cy="1555" r="6"/>
            <path d="M0 50 L20 30 Q40 20 60 60 M0 85 Q40 100 50 110 M20 100 L32 110 L20 120 M810 60 L850 85 M0 10 L20 0 M770 30 L730 50 M0 170 Q40 180 40 200 M790 200 L805 240 M5 225 L30 220 M10 245 L25 240"/>
        </g>
    </svg>

    <svg class="defs" width="0" height="0">
        <defs>
            <linearGradient id="skin" x1="0" y1="0" x2="0" y2="1"><stop offset="0" stop-color="#fdd25a"/><stop offset="1" stop-color="#eea22a"/></linearGradient>
            <linearGradient id="sleeve" x1="0" y1="0" x2="0" y2="1"><stop offset="0" stop-color="#5a96d8"/><stop offset="1" stop-color="#2a62b0"/></linearGradient>
            <radialGradient id="face" cx=".5" cy=".35" r=".7"><stop offset="0" stop-color="#fde26a"/><stop offset=".7" stop-color="#f9c13c"/><stop offset="1" stop-color="#ec9125"/></radialGradient>
            <linearGradient id="red" x1="0" y1="0" x2="0" y2="1"><stop offset="0" stop-color="#f2604c"/><stop offset="1" stop-color="#cc2418"/></linearGradient>
            <symbol id="pray" viewBox="0 0 62 61">
                <path d="M0 61 L0 52 Q8 47 15 41 L25 61 Z M62 61 L62 52 Q54 47 47 41 L37 61 Z" fill="url(#sleeve)"/>
                <path d="M30.5 3 Q28 -1 25 3 Q22 22 15 36 L14 43 L18 53 L25 60 L30.5 44 Z" fill="url(#skin)"/>
                <path d="M32.5 3 Q35 -1 38 3 Q41 22 48 36 L49 43 L45 53 L38 60 L32.5 44 Z" fill="url(#skin)"/>
                <path d="M31.5 3 L31.5 44" stroke="#d98f1f" stroke-width="1.2"/>
            </symbol>
            <symbol id="smile" viewBox="0 0 62 60">
                <circle cx="31" cy="31" r="27" fill="url(#face)"/>
                <path d="M11 22 Q18 14 25 21 M35 21 Q42 13 49 20" fill="none" stroke="#8a5412" stroke-width="2"/>
                <path d="M14 31 Q20 25 26 31 M36 31 Q42 25 48 31" fill="none" stroke="#6f4210" stroke-width="2.4"/>
                <path d="M22 41 Q30 49 39 41 Q31 45 22 41 Z" fill="#6f4210" stroke="#6f4210" stroke-width="1.6" stroke-linejoin="round"/>
                <path d="M53 22 C45 15 44 9 46 5 C49 1 52 3 53 6 C55 2 59 1 61 4 C63 9 59 16 53 22 Z" fill="url(#red)"/>
                <path d="M9 52 C2 45 -1 41 1 36 C3 33 7 33 9 37 C11 33 15 32 17 36 C18 42 14 47 9 52 Z" fill="url(#red)"/>
                <path d="M51 59 C44 53 41 49 43 45 C45 42 49 42 51 45 C53 42 57 42 59 45 C60 50 56 54 51 59 Z" fill="url(#red)"/>
            </symbol>
        </defs>
    </svg>

    <main class="chat">
        <div class="msg">
            <span class="msg-text">Thank you so much!</span>
            <span class="time">下午 7:17</span>
        </div>
        <div class="msg tail">
            <span class="msg-text">You are the best <svg class="emoji first"><use href="#pray"/></svg><svg class="emoji"><use href="#smile"/></svg></span>
            <span class="time">下午 7:17</span>
            <div class="reaction">
                <svg width="49" height="49" viewBox="0 0 49 49"><path d="M24.5 49 C16 38 0 27 0 13 C0 4 7 0 12 0 C18 0 22 3 24.5 7 C27 3 31 0 37 0 C42 0 49 4 49 13 C49 27 33 38 24.5 49 Z" fill="url(#red)"/></svg>
            </div>
        </div>

        <div class="date">5月21日 周四</div>

        <div class="msg">
            <span class="msg-text">Hello!</span>
            <span class="time">上午 3:17</span>
        </div>
        <div class="msg">
            <span class="msg-text">My packaged has areived</span>
            <span class="time">上午 3:18</span>
        </div>
        <div class="msg tail">
            <span class="msg-text">Thank you so much <svg class="emoji first"><use href="#smile"/></svg><svg class="emoji"><use href="#pray"/></svg></span>
            <span class="time">上午 3:18</span>
        </div>

        <div class="msg out first-out">
            <span class="msg-text">Ok</span>
            <span class="time">上午 3:18</span>
            <svg class="ticks" width="45" height="30" viewBox="0 0 45 30"><path d="M1 20 L9 28 L31 2 M20 26 L23 28 L44 2" fill="none" stroke="#3a78d6" stroke-width="4.2"/></svg>
        </div>
        <div class="reply out tail-right">
            <div class="quote">
                <div class="quote-text">My packaged has areived</div>
            </div>
            <svg class="scribble" width="500" height="120" viewBox="0 0 1500 360">
                <path d="M225 265 L300 285 L240 290 Z M1085 270 L1115 270 L1110 298 L1085 296 Z" fill="#2a62c4"/>
                <path d="M68 125 L228 113 L238 65 Q245 55 330 60 L480 50 L950 32 L970 50 L1150 36 L1170 70 L1215 80 L1224 190 L1195 240 L1135 280 L1000 290 L290 318 L275 305 L260 265 L160 255 L68 243 Z" fill="#000" stroke="#000" stroke-width="14" stroke-linejoin="round"/>
                <path d="M470 50 L950 27 L965 45 L700 70 L560 85 Z" fill="#2c3329"/>
            </svg>
            <div class="reply-line">Hope you like it and looking forward to</div>
            <div class="reply-row">
                <span class="reply-line">cooperate with you again</span>
                <span class="reply-meta">
                    <span class="time">上午 3:53</span>
                    <svg class="ticks" width="45" height="30" viewBox="0 0 45 30"><path d="M1 20 L9 28 L31 2 M20 26 L23 28 L44 2" fill="none" stroke="#3a78d6" stroke-width="4.2"/></svg>
                </span>
            </div>
        </div>

        <div class="msg after-reply">
            <span class="msg-text">Yes 100%</span>
            <span class="time">上午 4:06</span>
        </div>
        <div class="msg tail">
            <span class="msg-text">I will be buying more sooj</span>
            <span class="time">上午 4:06</span>
        </div>
    </main>
</body>
</html>
```

FILE: styles.css
```css
html, body
{
	margin: 0;
	padding: 0;
}

body
{
	position: relative;
	width: 1284px;
	height: 1632px;
	overflow: hidden;
	background-color: #f5f2ed;
	font-family: "Inter", "Noto Sans CJK SC", sans-serif;
	color: #000;
}

.doodles
{
	position: absolute;
	left: 0;
	top: 0;
}

.doodles *
{
	stroke: #e8e3da;
	stroke-width: 2.2px;
	stroke-linejoin: round;
	stroke-linecap: round;
	vector-effect: non-scaling-stroke;
}

.defs
{
	position: absolute;
}

.chat
{
	position: relative;
	display: flex;
	flex-direction: column;
	align-items: flex-start;
	padding: 16px 50px 0 50px;
}

.msg
{
	position: relative;
	display: flex;
	align-items: flex-start;
	gap: 38px;
	box-sizing: border-box;
	height: 102px;
	margin-bottom: 12.5px;
	padding: 0 30px 0 29px;
	background-color: #fff;
	border-radius: 30px;
	box-shadow: 0 1px 1px rgba(0, 0, 0, 0.05);
}

.msg-text
{
	display: flex;
	align-items: flex-start;
	margin-top: 19px;
	font-size: 48px;
	line-height: 58px;
	white-space: pre;
}

.time
{
	margin-top: 41px;
	font-size: 35px;
	font-variant-numeric: tabular-nums;
	line-height: 50px;
	word-spacing: -2px;
	color: #6e6e6e;
	white-space: pre;
}

.emoji
{
	display: inline-block;
	width: 62px;
	height: 61px;
	margin-top: -3px;
}

.emoji.first
{
	margin-left: 3px;
	margin-right: 7px;
}

.tail::before
{
	content: "";
	position: absolute;
	left: -20px;
	bottom: 0;
	width: 44px;
	height: 26px;
	background-color: #fff;
	clip-path: path("M20 0 C19 13 11 23 0 25 Q10 26 24 22 L44 26 L44 0 Z");
}

.tail-right::after
{
	content: "";
	position: absolute;
	right: -18px;
	bottom: 0;
	width: 40px;
	height: 26px;
	background-color: #dff9d0;
	clip-path: path("M22 0 C24 14 30 22 40 26 L0 26 L0 0 Z");
}

.reaction
{
	position: absolute;
	left: 31px;
	top: 93px;
	display: flex;
	align-items: center;
	justify-content: center;
	width: 102px;
	height: 78px;
	background-color: #fff;
	border-radius: 38px;
	box-shadow: 0 1px 2px rgba(0, 0, 0, 0.06);
}

.date
{
	align-self: center;
	box-sizing: border-box;
	width: 296px;
	height: 56px;
	margin-top: 163px;
	margin-bottom: 43px;
	background-color: #fff;
	border-radius: 22px;
	font-size: 36px;
	font-weight: 700;
	line-height: 56px;
	letter-spacing: 3px;
	text-align: center;
}

.out
{
	align-self: flex-end;
	background-color: #dff9d0;
}

.out .time
{
	color: #5b6f55;
}

.first-out
{
	margin-top: 25.5px;
	padding-right: 28px;
}

.ticks
{
	flex: none;
	margin-top: 49px;
	margin-left: -29px;
}

.reply
{
	position: relative;
	box-sizing: border-box;
	width: 945px;
	height: 358px;
	margin-bottom: 38.5px;
	padding: 11px 10px 0 11px;
	border-radius: 30px;
	box-shadow: 0 1px 1px rgba(0, 0, 0, 0.05);
}

.quote
{
	box-sizing: border-box;
	display: flex;
	align-items: flex-end;
	height: 179px;
	padding: 0 0 34px 28px;
	background-color: #dbf1d2;
	border-left: 12px solid #2a62c4;
	border-radius: 20px;
}

.quote-text
{
	font-size: 38px;
	line-height: 50px;
	letter-spacing: -0.05px;
	color: #3a4a3a;
}

.scribble
{
	position: absolute;
	left: -19px;
	top: -11px;
	filter: blur(1.2px);
}

.reply-line
{
	padding-left: 19px;
	font-size: 48px;
	line-height: 66.5px;
	white-space: pre;
}

.reply > .reply-line
{
	margin-top: 14px;
}

.reply-row
{
	display: flex;
	justify-content: space-between;
	padding-right: 17px;
}

.reply-meta
{
	display: flex;
	gap: 10px;
}

.reply-meta .time
{
	margin-top: 26px;
}

.reply-meta .ticks
{
	margin-top: 35px;
	margin-left: 0;
}
```
